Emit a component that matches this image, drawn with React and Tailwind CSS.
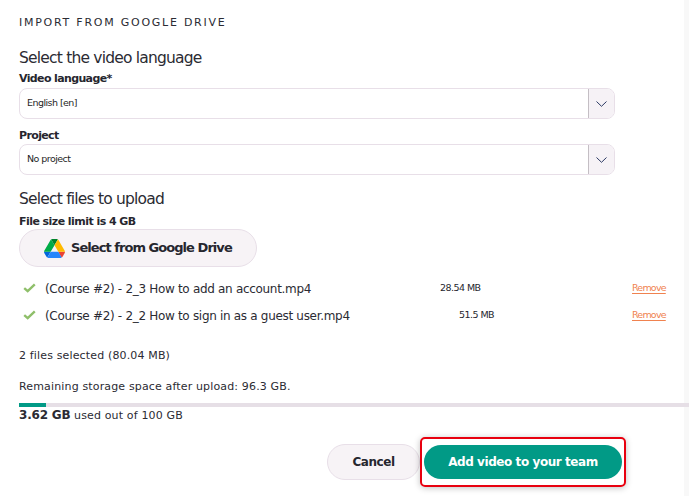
import React from 'react';

const font = "font-['DejaVu_Sans',sans-serif]";

const files = [
  { name: '(Course #2) - 2_3 How to add an account.mp4', size: '28.54 MB', sizeClass: 'w-[395px]' },
  { name: '(Course #2) - 2_2 How to sign in as a guest user.mp4', size: '51.5 MB', sizeClass: 'w-[414px]' },
];

const DriveLogo = () => (
  <svg viewBox="0 0 87.3 78" className="w-[21px] h-[19px]">
    <path d="m6.6 66.85 3.85 6.65c.8 1.4 1.95 2.5 3.3 3.3l13.75-23.8h-27.5c0 1.55.4 3.1 1.2 4.5z" fill="#0066da" />
    <path d="m43.65 25-13.75-23.8c-1.35.8-2.5 1.9-3.3 3.3l-25.4 44a9.06 9.06 0 0 0 -1.2 4.5h27.5z" fill="#00ac47" />
    <path d="m73.55 76.8c1.35-.8 2.5-1.9 3.3-3.3l1.6-2.75 7.65-13.25c.8-1.4 1.2-2.95 1.2-4.5h-27.502l5.852 11.5z" fill="#ea4335" />
    <path d="m43.65 25 13.75-23.8c-1.35-.8-2.9-1.2-4.5-1.2h-18.5c-1.6 0-3.15.45-4.5 1.2z" fill="#00832d" />
    <path d="m59.8 53h-32.3l-13.75 23.8c1.35.8 2.9 1.2 4.5 1.2h50.8c1.6 0 3.15-.45 4.5-1.2z" fill="#2684fc" />
    <path d="m73.4 26.5-12.7-22c-.8-1.4-1.95-2.5-3.3-3.3l-13.75 23.8 16.15 28h27.45c0-1.55-.4-3.1-1.2-4.5z" fill="#ffba00" />
  </svg>
);

const CheckMark = () => (
  <svg viewBox="0 0 14 11" className="w-[13px] h-[10px] shrink-0 -mt-[2px]">
    <path d="M1.2 5.6 5 9 12.8 1.6" fill="none" stroke="#8fbf6a" strokeWidth="2.6" />
  </svg>
);

const Chevron = () => (
  <svg viewBox="0 0 11 6" className="w-[11px] h-[6px]">
    <path d="M.5.5 5.5 5.3 10.5.5" fill="none" stroke="#2c3a63" strokeWidth="1" />
  </svg>
);

const SelectBox = ({ value }) => (
  <div className="flex h-[31px] w-[596px] rounded-lg border border-[#e8dfe8] bg-white overflow-hidden">
    <div className="flex-1 flex items-center pl-[7px] text-[9.5px] tracking-[-0.55px] text-[#1f1f27]">{value}</div>
    <div className="w-[26px] flex items-center justify-center bg-[#f6f2f6] border-l border-[#c4bec4]">
      <Chevron />
    </div>
  </div>
);

export default function App() {
  return (
    <div className={`${font} relative w-[689px] h-[496px] bg-white overflow-hidden text-[#26262e]`}>
      <div className="absolute right-0 top-0 w-[5px] h-full bg-[#f8f8f8]" />
      <div className="relative flex flex-col pt-[16px]">
        <div className="pl-[19px] h-[14px] leading-[14px] text-[11px] tracking-[1.75px] text-[#2b2b33]">IMPORT FROM GOOGLE DRIVE</div>

        <div className="pl-[19px] mt-[19px] h-[18px] leading-[18px] text-[15.5px] tracking-[-0.8px] text-[#2b2b33]">Select the video language</div>
        <div className="pl-[19px] mt-[5px] h-[14px] leading-[14px] text-[11px] font-bold tracking-[-0.63px]">Video language*</div>
        <div className="pl-[19px] mt-[2px]"><SelectBox value="English [en]" /></div>

        <div className="pl-[19px] mt-[10px] h-[14px] leading-[14px] text-[11px] font-bold tracking-[-0.63px]">Project</div>
        <div className="pl-[19px] mt-[1px]"><SelectBox value="No project" /></div>

        <div className="pl-[19px] mt-[15px] h-[18px] leading-[18px] text-[15.5px] tracking-[-0.8px] text-[#2b2b33]">Select files to upload</div>
        <div className="pl-[19px] mt-[7px] h-[14px] leading-[14px] text-[11px] font-bold tracking-[-0.55px]">File size limit is 4 GB</div>
        <div className="pl-[19px]">
          <button className="flex items-center h-[38px] w-[238px] rounded-full border border-[#e8dfe8] bg-[#f7f3f6] pl-[24px] gap-[6px] text-[13px] font-bold tracking-[-0.95px]">
            <DriveLogo />
            Select from Google Drive
          </button>
        </div>

        <div className="mt-[8px] flex flex-col">
          {files.map((file) => (
            <div key={file.name} className="flex items-center h-[27px] pl-[23px]">
              <CheckMark />
              <div className={`${file.sizeClass} ml-[9px] shrink-0 text-[12px] tracking-[-0.31px] whitespace-nowrap text-[#2b2b33]`}>{file.name}</div>
              <div className="text-[9.5px] tracking-[-0.55px] whitespace-nowrap">{file.size}</div>
              <a className="absolute left-[632px] text-[9.5px] tracking-[-0.8px] text-[#f0824f] underline underline-offset-2">Remove</a>
            </div>
          ))}
        </div>

        <div className="pl-[19px] mt-[20px] h-[14px] leading-[14px] text-[11px] tracking-[0.15px] text-[#2b2b33]">2 files selected (80.04 MB)</div>
        <div className="pl-[19px] mt-[17px] h-[14px] leading-[14px] text-[11px] tracking-[0.15px] text-[#2b2b33]">Remaining storage space after upload: 96.3 GB.</div>

        <div className="ml-[19px] mt-[9px] h-[4px] bg-[#e6dfe6]">
          <div className="h-full w-[27px] bg-[#019a86]" />
        </div>
        <div className="pl-[19px] mt-[1px] h-[14px] leading-[14px] text-[11px] tracking-[0.15px] text-[#2b2b33]"><span className="font-bold text-[12px] tracking-[-0.2px]">3.62 GB</span> used out of 100 GB</div>

        <div className="flex items-center justify-end mt-[15px] pr-[63px]">
          <button className="w-[93px] h-[36px] rounded-full border border-[#e8dfe8] bg-[#f7f3f6] text-[12px] font-bold tracking-[-0.45px]">Cancel</button>
          <div className="rounded-[5px] border-2 border-[#e8000f] px-[2px] py-[6px] shadow-[0_1px_6px_rgba(0,0,0,0.25)]">
            <button className="w-[198px] h-[34px] rounded-full bg-[#019a86] text-white text-[12px] font-bold tracking-[-0.43px]">Add video to your team</button>
          </div>
        </div>
      </div>
    </div>
  );
}
